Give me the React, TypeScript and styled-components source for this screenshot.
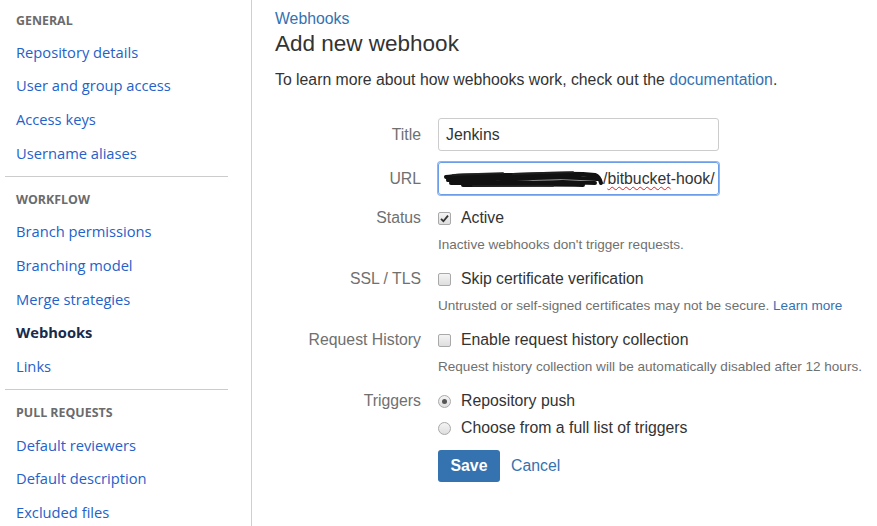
import React from "react";
import styled, { createGlobalStyle } from "styled-components";

const GlobalStyle = createGlobalStyle`
  html, body { margin: 0; padding: 0; background: #fff; overflow: hidden; }
  body { font-family: "Liberation Sans", Arial, sans-serif; color: #333; }
  * { box-sizing: border-box; }
`;

const Page = styled.div`
  display: flex;
  width: 877px;
  height: 526px;
  overflow: hidden;
`;

const Sidebar = styled.nav`
  width: 252px;
  flex: none;
  border-right: 1px solid #cfcfcf;
  padding-left: 5px;
  padding-right: 23px;
  font-family: "Open Sans", "Noto Sans", sans-serif;
`;

const Section = styled.div<{ $first?: boolean; $last?: boolean }>`
  padding-top: ${(p) => (p.$first ? "5.5px" : "7.8px")};
  padding-bottom: 6px;
  border-bottom: ${(p) => (p.$last ? "none" : "1px solid #cccccc")};
`;

const SectionHeader = styled.div`
  height: 30.4px;
  line-height: 30.4px;
  padding-left: 11px;
  font-size: 12.4px;
  font-weight: 700;
  color: #6b6b6b;
  text-transform: uppercase;
`;

const NavItem = styled.a<{ $active?: boolean }>`
  display: block;
  height: 33.6px;
  line-height: 33.6px;
  padding-left: 11px;
  font-size: 14.7px;
  color: ${(p) => (p.$active ? "#172b4d" : "#2462c9")};
  font-weight: ${(p) => (p.$active ? 700 : 400)};
  text-decoration: none;
  white-space: nowrap;
`;

const Main = styled.main`
  flex: 1;
  padding: 9px 0 0 23px;
  font-size: 15.8px;
`;

const Breadcrumb = styled.a`
  display: block;
  height: 21px;
  line-height: 20px;
  color: #3572b0;
  text-decoration: none;
  font-size: 15.8px;
`;

const Heading = styled.h2`
  margin: 0;
  height: 28px;
  line-height: 28px;
  font-size: 22.5px;
  font-weight: 400;
  color: #333;
`;

const Intro = styled.p`
  margin: 11px 0 0;
  line-height: 22px;
  color: #333;
`;

const Link = styled.a`
  color: #3572b0;
  text-decoration: none;
`;

const Form = styled.form`
  margin-top: 27px;
  display: flex;
  flex-direction: column;
`;

const Row = styled.div<{ $mt?: number }>`
  display: grid;
  grid-template-columns: 146px 1fr;
  column-gap: 17px;
  margin-top: ${(p) => p.$mt ?? 0}px;
`;

const Label = styled.label<{ $h?: number }>`
  text-align: right;
  color: #707070;
  line-height: ${(p) => p.$h ?? 22}px;
  white-space: nowrap;
`;

const Field = styled.div`
  display: flex;
  flex-direction: column;
`;

const TextInput = styled.div<{ $focus?: boolean }>`
  width: 281px;
  height: 33px;
  border: 1px solid ${(p) => (p.$focus ? "#6b9ee8" : "#cccccc")};
  box-shadow: ${(p) => (p.$focus ? "0 0 0 1px #8fb5ef" : "none")};
  border-radius: 3px;
  display: flex;
  align-items: center;
  padding: 0 7px;
  color: #333;
  font-size: 15.8px;
  overflow: hidden;
  white-space: nowrap;
`;

const Spell = styled.span`
  text-decoration: underline wavy #e02020;
  text-decoration-thickness: 1px;
  text-underline-offset: 2px;
`;

const CheckLine = styled.div<{ $mt?: number }>`
  display: flex;
  align-items: center;
  gap: 10px;
  height: 22px;
  margin-top: ${(p) => p.$mt ?? 0}px;
  color: #333;
`;

const Box = styled.span<{ $round?: boolean }>`
  width: 13px;
  height: 13px;
  flex: none;
  border: 1px solid #a9a9a9;
  border-radius: ${(p) => (p.$round ? "50%" : "2px")};
  background: linear-gradient(#f4f4f4, #dedede);
  display: flex;
  align-items: center;
  justify-content: center;
`;

const Dot = styled.span`
  width: 5px;
  height: 5px;
  border-radius: 50%;
  background: #555;
`;

const Help = styled.div`
  margin-top: 7px;
  line-height: 18px;
  font-size: 13.55px;
  color: #707070;
`;

const Actions = styled.div`
  display: flex;
  align-items: center;
  gap: 11px;
  margin-top: 11px;
`;

const SaveButton = styled.button`
  width: 62px;
  height: 32px;
  border: none;
  border-radius: 3px;
  background: #3572b0;
  color: #fff;
  font-family: "Liberation Sans", Arial, sans-serif;
  font-weight: 700;
  font-size: 15.8px;
  padding: 0;
`;

const Check = () => (
  <svg width="9" height="9" viewBox="0 0 9 9">
    <path d="M1 4.8 L3.4 7.2 L8 1.6" fill="none" stroke="#333" strokeWidth="1.8" />
  </svg>
);

const Scribble = () => (
  <svg width="160" height="22" viewBox="0 0 160 22" style={{ flex: "none", marginLeft: -3 }}>
    <path
      d="M3 9 C20 6 45 7 70 7 C95 6 120 5 140 6 L152 7 C155 8 157 11 158 15 M5 12 C30 10 60 11 90 10 C115 9 135 9 154 11 M8 15 C40 14 80 15 120 14 L152 15 M20 17 C60 17 100 16 140 17"
      fill="none"
      stroke="#111"
      strokeWidth="4"
      strokeLinecap="round"
    />
    <path
      d="M10 7 L60 5 M70 6 L130 4 M30 18 L110 18"
      fill="none"
      stroke="#222"
      strokeWidth="2"
      strokeLinecap="round"
      opacity="0.8"
    />
  </svg>
);

const general = ["Repository details", "User and group access", "Access keys", "Username aliases"];
const workflow = ["Branch permissions", "Branching model", "Merge strategies", "Webhooks", "Links"];
const pulls = ["Default reviewers", "Default description", "Excluded files"];

export default function App() {
  return (
    <>
      <GlobalStyle />
      <Page>
        <Sidebar>
          <Section $first>
            <SectionHeader>General</SectionHeader>
            {general.map((g) => (
              <NavItem key={g}>{g}</NavItem>
            ))}
          </Section>
          <Section>
            <SectionHeader>Workflow</SectionHeader>
            {workflow.map((g) => (
              <NavItem key={g} $active={g === "Webhooks"}>
                {g}
              </NavItem>
            ))}
          </Section>
          <Section $last>
            <SectionHeader>Pull requests</SectionHeader>
            {pulls.map((g) => (
              <NavItem key={g}>{g}</NavItem>
            ))}
          </Section>
        </Sidebar>
        <Main>
          <Breadcrumb>Webhooks</Breadcrumb>
          <Heading>Add new webhook</Heading>
          <Intro>
            To learn more about how webhooks work, check out the <Link>documentation</Link>.
          </Intro>
          <Form>
            <Row>
              <Label $h={33}>Title</Label>
              <TextInput>Jenkins</TextInput>
            </Row>
            <Row $mt={11}>
              <Label $h={33}>URL</Label>
              <TextInput $focus>
                <Scribble />
                <span>
                  /<Spell>bitbucket</Spell>-hook/
                </span>
              </TextInput>
            </Row>
            <Row $mt={12}>
              <Label>Status</Label>
              <Field>
                <CheckLine>
                  <Box>
                    <Check />
                  </Box>
                  Active
                </CheckLine>
                <Help>Inactive webhooks don't trigger requests.</Help>
              </Field>
            </Row>
            <Row $mt={14}>
              <Label>SSL / TLS</Label>
              <Field>
                <CheckLine>
                  <Box />
                  Skip certificate verification
                </CheckLine>
                <Help>
                  Untrusted or self-signed certificates may not be secure. <Link>Learn more</Link>
                </Help>
              </Field>
            </Row>
            <Row $mt={14}>
              <Label>Request History</Label>
              <Field>
                <CheckLine>
                  <Box />
                  Enable request history collection
                </CheckLine>
                <Help>Request history collection will be automatically disabled after 12 hours.</Help>
              </Field>
            </Row>
            <Row $mt={14}>
              <Label>Triggers</Label>
              <Field>
                <CheckLine>
                  <Box $round>
                    <Dot />
                  </Box>
                  Repository push
                </CheckLine>
                <CheckLine $mt={5}>
                  <Box $round />
                  Choose from a full list of triggers
                </CheckLine>
                <Actions>
                  <SaveButton type="button">Save</SaveButton>
                  <Link>Cancel</Link>
                </Actions>
              </Field>
            </Row>
          </Form>
        </Main>
      </Page>
    </>
  );
}
